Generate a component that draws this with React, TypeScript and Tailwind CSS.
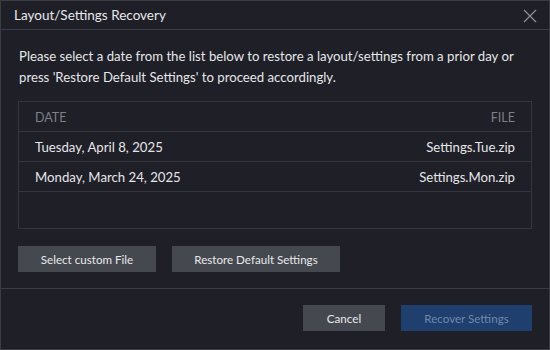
export default function App() {
  return (
    <div className="w-[550px] h-[350px] bg-[#1e1f27] border border-[#3b3c45] flex flex-col text-[#e6e6e8] font-['Lato',sans-serif]">
      <div className="h-[29px] shrink-0 border-b border-[#3b3c45] flex items-center justify-between pl-[13px] pr-[12px] pt-[2px]">
        <span className="text-[13.5px] leading-none text-[#e8e8ea]">Layout/Settings Recovery</span>
        <svg width="14" height="14" viewBox="0 0 14 14" className="text-[#8e8f96]">
          <path d="M1 1 L13 13 M13 1 L1 13" stroke="currentColor" strokeWidth="1.3" />
        </svg>
      </div>
      <div className="px-[17px] pt-[16px] flex flex-col">
        <p className="text-[13.2px] leading-[21px] pl-[1px]">
          Please select a date from the list below to restore a layout/settings from a prior day or
          <br />
          press 'Restore Default Settings' to proceed accordingly.
        </p>
        <div className="mt-[13px] h-[128px] border border-[#34353e] flex flex-col text-[13.2px]">
          <div className="h-[30px] flex items-center justify-between px-[16px] pt-[3px] border-b border-[#34353e] text-[#7f8087] text-[12.5px]">
            <span>DATE</span>
            <span>FILE</span>
          </div>
          <div className="h-[30px] flex items-center justify-between px-[16px] pt-[2px] border-b border-[#34353e]">
            <span>Tuesday, April 8, 2025</span>
            <span>Settings.Tue.zip</span>
          </div>
          <div className="h-[30px] flex items-center justify-between px-[16px] pt-[2px] border-b border-[#34353e]">
            <span>Monday, March 24, 2025</span>
            <span>Settings.Mon.zip</span>
          </div>
        </div>
        <div className="mt-[17px] flex gap-[16px] text-[11.6px]">
          <button className="w-[138px] h-[26px] pt-[1px] bg-[#45484f] text-[#e8e8ea]">Select custom File</button>
          <button className="w-[168px] h-[26px] pt-[1px] bg-[#45484f] text-[#e8e8ea]">Restore Default Settings</button>
        </div>
      </div>
      <div className="mt-[16px] border-b border-[#3b3c45]" />
      <div className="pt-[16px] pr-[17px] flex justify-end gap-[16px] text-[11.6px]">
        <button className="w-[82px] h-[26px] pt-[1px] bg-[#45484f] text-[#e8e8ea]">Cancel</button>
        <button className="w-[131px] h-[26px] pt-[1px] bg-[#1f3f6e] text-[#6f87ab]">Recover Settings</button>
      </div>
    </div>
  );
}
